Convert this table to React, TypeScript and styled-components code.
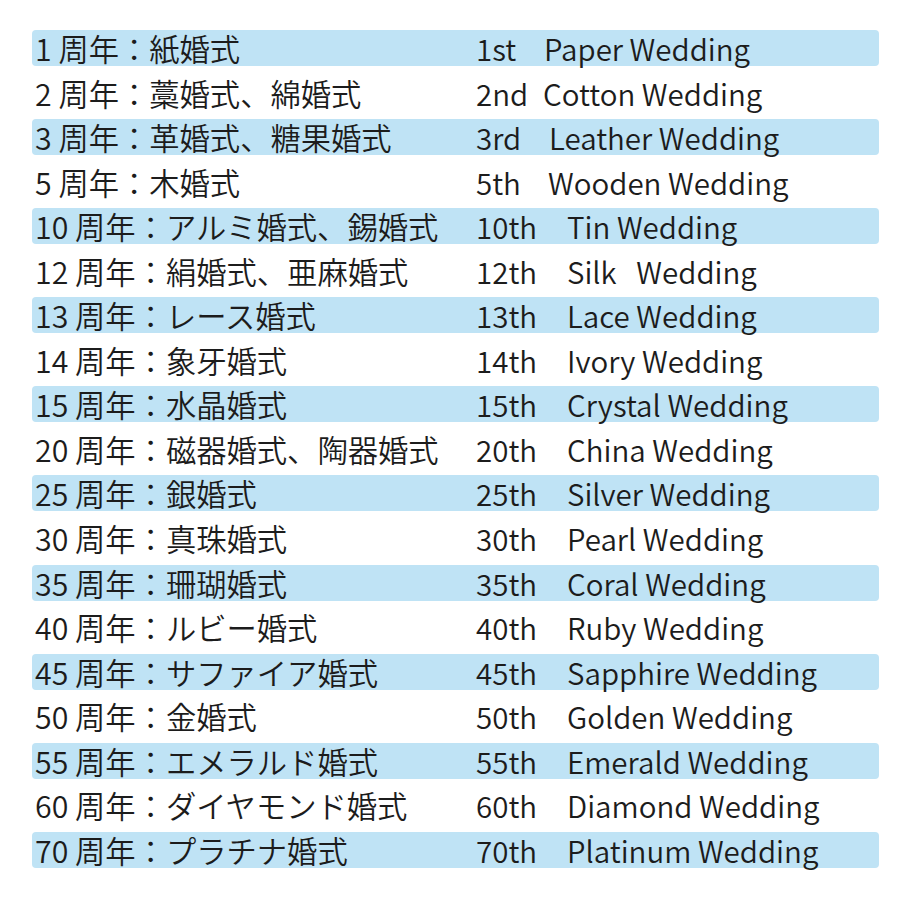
import React from "react";
import styled, { createGlobalStyle } from "styled-components";

const GlobalStyle = createGlobalStyle`
  html, body {
    margin: 0;
    padding: 0;
    background: #ffffff;
  }
  body {
    font-family: "Noto Sans CJK JP", "Noto Sans", sans-serif;
  }
`;

type Item = {
  ja: string;
  ord: string;
  name: string;
  indent: number;
};

const items: Item[] = [
  { ja: "1 周年：紙婚式", ord: "1st", name: "Paper Wedding", indent: 0 },
  { ja: "2 周年：藁婚式、綿婚式", ord: "2nd", name: "Cotton Wedding", indent: -1 },
  { ja: "3 周年：革婚式、糖果婚式", ord: "3rd", name: "Leather Wedding", indent: 5 },
  { ja: "5 周年：木婚式", ord: "5th", name: "Wooden Wedding", indent: 4 },
  { ja: "10 周年：アルミ婚式、錫婚式", ord: "10th", name: "Tin Wedding", indent: 23 },
  { ja: "12 周年：絹婚式、亜麻婚式", ord: "12th", name: "Silk   Wedding", indent: 23 },
  { ja: "13 周年：レース婚式", ord: "13th", name: "Lace Wedding", indent: 23 },
  { ja: "14 周年：象牙婚式", ord: "14th", name: "Ivory Wedding", indent: 23 },
  { ja: "15 周年：水晶婚式", ord: "15th", name: "Crystal Wedding", indent: 23 },
  { ja: "20 周年：磁器婚式、陶器婚式", ord: "20th", name: "China Wedding", indent: 23 },
  { ja: "25 周年：銀婚式", ord: "25th", name: "Silver Wedding", indent: 23 },
  { ja: "30 周年：真珠婚式", ord: "30th", name: "Pearl Wedding", indent: 23 },
  { ja: "35 周年：珊瑚婚式", ord: "35th", name: "Coral Wedding", indent: 23 },
  { ja: "40 周年：ルビー婚式", ord: "40th", name: "Ruby Wedding", indent: 23 },
  { ja: "45 周年：サファイア婚式", ord: "45th", name: "Sapphire Wedding", indent: 23 },
  { ja: "50 周年：金婚式", ord: "50th", name: "Golden Wedding", indent: 23 },
  { ja: "55 周年：エメラルド婚式", ord: "55th", name: "Emerald Wedding", indent: 23 },
  { ja: "60 周年：ダイヤモンド婚式", ord: "60th", name: "Diamond Wedding", indent: 23 },
  { ja: "70 周年：プラチナ婚式", ord: "70th", name: "Platinum Wedding", indent: 23 },
];

const Page = styled.div`
  width: 900px;
  height: 900px;
  box-sizing: border-box;
  padding: 30px 21px 0 32px;
  background: #ffffff;
`;

const List = styled.div`
  display: grid;
  grid-auto-rows: 36px;
  row-gap: 8.56px;
`;

const Row = styled.div<{ $shaded: boolean }>`
  display: grid;
  grid-template-columns: 441px 68px 1fr;
  align-items: center;
  padding-left: 3px;
  border-radius: 4px;
  background: ${(p) => (p.$shaded ? "#bfe3f5" : "transparent")};
  color: #1c1c1c;
  font-size: 30px;
  font-weight: 350;
  line-height: 36px;
  white-space: pre;
`;

const JaText = styled.span`
  font-size: 30.3px;
`;

const Ordinal = styled.span`
  font-size: 29.5px;
`;

const Name = styled.span<{ $indent: number }>`
  margin-left: ${(p) => p.$indent}px;
  font-size: 29.5px;
`;

export default function App() {
  return (
    <>
      <GlobalStyle />
      <Page>
        <List>
          {items.map((it, i) => (
            <Row key={it.ord} $shaded={i % 2 === 0}>
              <JaText>{it.ja}</JaText>
              <Ordinal>{it.ord}</Ordinal>
              <Name $indent={it.indent}>{it.name}</Name>
            </Row>
          ))}
        </List>
      </Page>
    </>
  );
}
